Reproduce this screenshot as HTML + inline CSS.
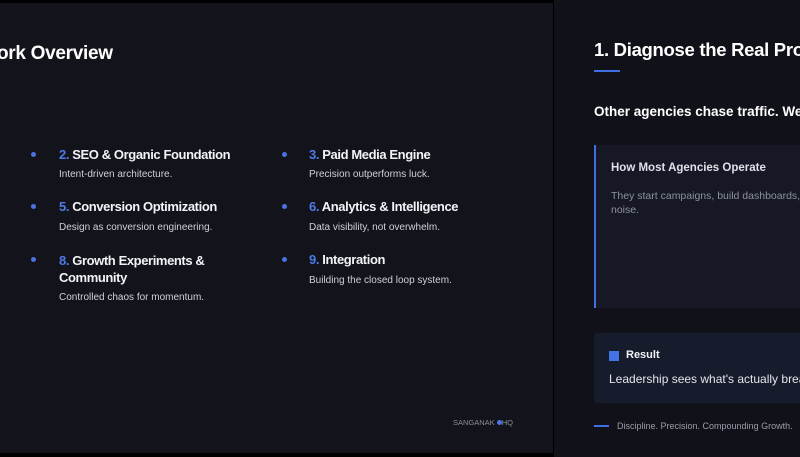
<!DOCTYPE html>
<html><head><meta charset="utf-8"><style>
*{margin:0;padding:0;box-sizing:border-box}
body{width:800px;height:457px;background:#000;overflow:hidden;font-family:"Liberation Sans",Arial,sans-serif;position:relative}
.left{position:absolute;left:0;top:3px;width:553px;height:450px;background:#13141b;overflow:hidden}
.right{position:absolute;left:554px;top:0;width:246px;height:457px;background:#111219;overflow:hidden}
.b{font-weight:bold;color:#fff}
.t{position:absolute;white-space:nowrap}
.dot{position:absolute;width:5px;height:5px;border-radius:50%;background:#4a72e0}
.h{font-size:13px;font-weight:bold;color:#f2f3f7;letter-spacing:-0.4px}
.h span{color:#4f7be8}
.s{font-size:10px;color:#cfd1d8}
</style></head><body>
<div class="left">
<div class="t b" style="left:-3px;top:40px;font-size:19px;letter-spacing:-0.3px">ork Overview</div>
<div class="dot" style="left:31px;top:149px"></div>
<div class="t h" style="left:59px;top:144px"><span>2.</span> SEO &amp; Organic Foundation</div>
<div class="t s" style="left:59px;top:166px">Intent-driven architecture.</div>
<div class="dot" style="left:31px;top:201px"></div>
<div class="t h" style="left:59px;top:196px"><span>5.</span> Conversion Optimization</div>
<div class="t s" style="left:59px;top:219px">Design as conversion engineering.</div>
<div class="dot" style="left:31px;top:254px"></div>
<div class="t h" style="left:59px;top:249px;line-height:17px"><span>8.</span> Growth Experiments &amp;<br>Community</div>
<div class="t s" style="left:59px;top:289px">Controlled chaos for momentum.</div>
<div class="dot" style="left:282px;top:149px"></div>
<div class="t h" style="left:309px;top:144px"><span>3.</span> Paid Media Engine</div>
<div class="t s" style="left:309px;top:166px">Precision outperforms luck.</div>
<div class="dot" style="left:282px;top:201px"></div>
<div class="t h" style="left:309px;top:196px"><span>6.</span> Analytics &amp; Intelligence</div>
<div class="t s" style="left:309px;top:219px">Data visibility, not overwhelm.</div>
<div class="dot" style="left:282px;top:254px"></div>
<div class="t h" style="left:309px;top:249px"><span>9.</span> Integration</div>
<div class="t s" style="left:309px;top:272px">Building the closed loop system.</div>
<div class="t" style="left:453px;top:415px;font-size:7.5px;color:#8a8d99">SANGANAK <span style="display:inline-block;width:5px;height:5px;border-radius:50%;background:#4a72e0"></span>HQ</div>
</div>
<div class="right">
<div class="t b" style="left:40px;top:39px;font-size:18.5px;letter-spacing:-0.3px">1. Diagnose the Real Problem</div>
<div style="position:absolute;left:40px;top:70px;width:26px;height:2px;background:#3f6fe0"></div>
<div class="t b" style="left:40px;top:104px;font-size:13.5px">Other agencies chase traffic. We diagnose</div>
<div style="position:absolute;left:40px;top:145px;width:210px;height:163px;background:#161826;border-left:2px solid #3f6fe0"></div>
<div class="t" style="left:57px;top:162px;font-size:11.5px;font-weight:bold;color:#dfe1e8">How Most Agencies Operate</div>
<div class="t" style="left:57px;top:189px;font-size:10.5px;color:#8e919c;line-height:14px">They start campaigns, build dashboards, and<br>noise.</div>
<div style="position:absolute;left:40px;top:333px;width:210px;height:70px;background:#171c2c;border-radius:3px"></div>
<div style="position:absolute;left:55px;top:351px;width:10px;height:10px;background:#4373e6"></div>
<div class="t" style="left:72px;top:349px;font-size:11px;font-weight:bold;color:#f2f3f7">Result</div>
<div class="t" style="left:55px;top:372px;font-size:12px;color:#e3e5ec">Leadership sees what's actually breaking</div>
<div style="position:absolute;left:40px;top:425px;width:15px;height:2px;background:#3f6fe0"></div>
<div class="t" style="left:63px;top:421px;font-size:9px;color:#9a9daa">Discipline. Precision. Compounding Growth.</div>
</div>
</body></html>
